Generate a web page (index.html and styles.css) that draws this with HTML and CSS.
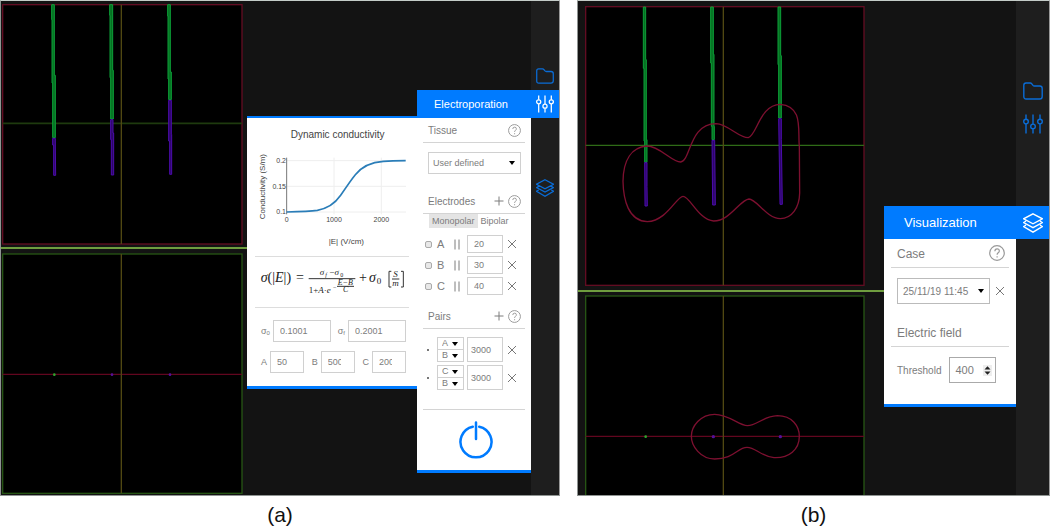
FILE: index.html
```html
<!DOCTYPE html>
<html lang="en">
<head>
<meta charset="utf-8">
<title>Electroporation planning</title>
<link rel="stylesheet" href="styles.css">
</head>
<body>
<svg class="sprite" aria-hidden="true">
  <symbol id="folder" viewBox="0 0 20 20"><path d="M.8 4.2q0-2.2 2.2-2.2h4.2q1 0 1.6.8l1.2 1.6q.5.6 1.4.6h5.400q2.400 0 2.400 2.400v8q0 2.600-2.600 2.600H3.200Q.8 18 .8 15.500z"/></symbol>
  <symbol id="sliders" viewBox="0 0 20 20"><path d="M3 .5v4.700M3 10v9.500M10 .5v9.500M10 14.800v4.700M17 .5v4.700M17 10v9.500"/><circle cx="3" cy="7.600" r="2.300"/><circle cx="10" cy="12.400" r="2.300"/><circle cx="17" cy="7.600" r="2.300"/></symbol>
  <symbol id="layers" viewBox="0 0 20 20"><path d="M10 .8l9.400 5-9.400 5-9.400-5zM3 8.200l-2.400 1.400 9.400 5 9.400-5L17 8.200M3 12.200l-2.400 1.400 9.400 5.600 9.400-5.600-2.400-1.400"/></symbol>
  <symbol id="help" viewBox="0 0 16 16"><circle cx="8" cy="8" r="7.300"/><path d="M5.900 6.200q0-2.300 2.200-2.300t2.200 2q0 1.100-1.100 1.900T8.100 9.800M8.100 11.300v1.300"/></symbol>
  <symbol id="plus" viewBox="0 0 10 10"><path d="M5 .5v9M.5 5h9"/></symbol>
  <symbol id="cross" viewBox="0 0 10 10"><path d="M1 1l8 8M9 1l-8 8"/></symbol>
  <symbol id="needle" viewBox="0 0 6 10"><path d="M1 0v10M5 0v10"/></symbol>
</svg>
<main class="figures">
  <figure class="figure">
    <div class="app app-a">
      <div class="views">
        <svg class="view" viewBox="6 11 723 723" role="img" aria-label="Coronal view">
          <rect class="slice red" x="8" y="13" width="718" height="718"/>
          <path class="axis-green" d="M8 369H726"/><path class="axis-yellow" d="M364 13V731"/>
          <path class="shaft" d="M155 13H163V225H166V412H158V248H156V58H155Z"/>
          <path class="tip" d="M158 414H166V440L167 525H161V434H158Z"/>
          <path class="shaft" d="M329 13H338V210H340V356H332V232H330V45H329Z"/>
          <path class="tip" d="M332 358H339V398H341V524H334V418H332Z"/>
          <path class="shaft" d="M503 13H511V215H514V298H506V236H504V47H503Z"/>
          <path class="tip" d="M506 300H514V402H515V522H509V422H506Z"/>
        </svg>
        <hr class="split">
        <svg class="view" viewBox="6 38 723 723" role="img" aria-label="Axial view">
          <rect class="slice green" x="8" y="41" width="718" height="718"/>
          <path class="axis-red" d="M8 402H726"/><path class="axis-yellow" d="M364 41V759"/>
          <circle class="dot-green" cx="163" cy="403" r="4"/><circle class="dot-purple" cx="336" cy="403" r="4"/><circle class="dot-purple" cx="510" cy="403" r="4"/>
        </svg>
      </div>
      <nav class="rail">
        <button aria-label="Files"><svg><use href="#folder"/></svg></button>
        <button class="active" aria-label="Electroporation"><svg><use href="#sliders"/></svg></button>
        <button class="last" aria-label="Visualization"><svg><use href="#layers"/></svg></button>
      </nav>
      <div class="drawer">
        <section class="curve-panel">
          <svg class="chart" viewBox="21 39 510 414" role="img" aria-label="Dynamic conductivity">
            <path class="grid" d="M140 167H498M140 244H498M140 321H498M282 158V328M424 158V328"/>
            <path class="zero" d="M140 158V328"/>
            <path class="curve" d="M140 321C180 320 210 319 232 316C262 311 284 297 302 271C320 244 332 226 346 209C370 179 400 171 430 169C455 167 475 167 497 167"/>
            <text class="title" x="293" y="99">Dynamic conductivity</text>
            <text class="label" transform="translate(75 245) rotate(-90)">Conductivity (S/m)</text>
            <text class="label" x="319" y="418">|E| (V/cm)</text>
            <g class="tick end"><text x="138" y="174">0.2</text><text x="138" y="251">0.15</text><text x="138" y="328">0.1</text></g>
            <g class="tick"><text x="140" y="352">0</text><text x="282" y="352">1000</text><text x="424" y="352">2000</text></g>
          </svg>
          <svg class="formula" viewBox="45 21 462 150" role="img" aria-label="Conductivity formula">
            <text class="f-main" x="62" y="97"><tspan class="it">σ</tspan>(|<tspan class="it">E</tspan>|)</text>
            <text class="f-main" x="168" y="97">=</text>
            <text class="f-mid it" x="239" y="76">σ</text><text class="f-small it" x="256" y="81">f</text>
            <text class="f-mid" x="268" y="76">−<tspan class="it">σ</tspan></text><text class="f-small" x="301" y="80">0</text>
            <path d="M206 86H346" />
            <text class="f-mid" x="206" y="129">1+<tspan class="it">A</tspan>·<tspan class="it">e</tspan></text>
            <text class="f-small" x="279" y="116">−</text>
            <text class="f-exp it" x="293" y="106">E−B</text>
            <path d="M291 109H342"/>
            <text class="f-exp it" x="309" y="127">C</text>
            <text class="f-main" x="357" y="97">+</text>
            <text class="f-main it" x="387" y="97">σ</text><text class="f-mid" x="410" y="103">0</text>
            <path d="M454 64H447V111H454M483 64H490V111H483M456 87H478"/>
            <text class="f-mid it" x="460" y="81">S</text><text class="f-mid it" x="457" y="108">m</text>
          </svg>
          <div class="params">
            <label>σ<sub>0</sub><input class="wide" value="0.1001"></label>
            <label>σ<sub>f</sub><input class="wide" value="0.2001"></label>
          </div>
          <div class="params">
            <label>A<input value="50"></label>
            <label>B<input value="500"></label>
            <label>C<input value="200"></label>
          </div>
        </section>
        <section class="panel">
          <h1>Electroporation</h1>
          <header class="head"><h2>Tissue</h2><button aria-label="Help"><svg class="help"><use href="#help"/></svg></button></header>
          <div class="select tissue"><select aria-label="Tissue"><option>User defined</option></select></div>
          <header class="head"><h2>Electrodes</h2><button aria-label="Add electrode"><svg class="plus"><use href="#plus"/></svg></button><button aria-label="Help"><svg class="help"><use href="#help"/></svg></button></header>
          <div class="tabs"><button class="on">Monopolar</button><button>Bipolar</button></div>
          <ul class="electrodes">
            <li><input type="checkbox" id="ea"><label for="ea">A</label><svg class="needle"><use href="#needle"/></svg><input class="num" aria-label="Length A" value="20"><button aria-label="Remove A"><svg class="cross"><use href="#cross"/></svg></button></li>
            <li><input type="checkbox" id="eb"><label for="eb">B</label><svg class="needle"><use href="#needle"/></svg><input class="num" aria-label="Length B" value="30"><button aria-label="Remove B"><svg class="cross"><use href="#cross"/></svg></button></li>
            <li><input type="checkbox" id="ec"><label for="ec">C</label><svg class="needle"><use href="#needle"/></svg><input class="num" aria-label="Length C" value="40"><button aria-label="Remove C"><svg class="cross"><use href="#cross"/></svg></button></li>
          </ul>
          <header class="head"><h2>Pairs</h2><button aria-label="Add pair"><svg class="plus"><use href="#plus"/></svg></button><button aria-label="Help"><svg class="help"><use href="#help"/></svg></button></header>
          <ul class="pairs">
            <li><i class="bullet"></i><div class="duo"><div class="select"><select aria-label="First electrode"><option>A</option></select></div><div class="select"><select aria-label="Second electrode"><option>B</option></select></div></div><input class="volt" aria-label="Voltage" value="3000"><button aria-label="Remove pair"><svg class="cross"><use href="#cross"/></svg></button></li>
            <li><i class="bullet"></i><div class="duo"><div class="select"><select aria-label="First electrode"><option>C</option></select></div><div class="select"><select aria-label="Second electrode"><option>B</option></select></div></div><input class="volt" aria-label="Voltage" value="3000"><button aria-label="Remove pair"><svg class="cross"><use href="#cross"/></svg></button></li>
          </ul>
          <div class="run"><button aria-label="Run"><svg class="power" viewBox="0 0 36 38"><path d="M14.800 5.700A15.500 15.500 0 1 0 21.200 5.700M18 1.500V18"/></svg></button></div>
        </section>
      </div>
    </div>
    <figcaption>(a)</figcaption>
  </figure>
  <figure class="figure">
    <div class="app app-b">
      <div class="views">
        <svg class="view" viewBox="45 19 840 840" role="img" aria-label="Coronal view">
          <rect class="slice red" x="47" y="21" width="835" height="836"/>
          <path class="axis-green bright" d="M47 437H882"/>
          <path class="shaft" d="M220 22H227V180H229V420H231V488H224V424H222V206H220Z"/>
          <path class="tip" d="M224 489H231V560L232 619H225Z"/>
          <path class="shaft" d="M422 22H430V164H432V380H433V420H426V380H424V190H422Z"/>
          <path class="tip" d="M426 422H434L436 616H428Z"/>
          <path class="shaft" d="M624 22H632V168H634V355H626V195H624Z"/>
          <path class="tip" d="M626 357H634V420L637 614H630Z"/>
          <path class="axis-yellow" d="M460 21V857"/>
          <path class="contour" d="M230 439C270 439 305 487 332 487C362 485 357 372 438 372C475 374 505 414 535 414C560 408 570 314 631 314C700 320 683 390 688 440L689 580C688 625 665 657 631 657C590 657 560 598 537 598C510 600 480 664 431 664C385 660 360 590 339 590C320 590 290 664 232 666C175 664 160 600 159 545C160 480 185 443 230 439Z"/>
        </svg>
        <hr class="split">
        <svg class="view" viewBox="43 76 840 600" role="img" aria-label="Axial view">
          <rect class="slice green" x="45" y="79" width="835" height="835"/>
          <path class="axis-red" d="M45 500H880"/><path class="axis-yellow" d="M458 79V680"/>
          <path class="contour" d="M432 434C475 434 505 468 530 468C560 468 575 440 620 438C665 438 686 470 686 500C686 540 655 566 610 564C570 560 555 533 529 533C500 533 490 568 432 568C390 568 362 530 362 500C362 470 390 434 432 434Z"/>
          <circle class="dot-green" cx="225" cy="501" r="4"/><circle class="dot-purple" cx="428" cy="501" r="5"/><circle class="dot-purple" cx="629" cy="501" r="5"/>
        </svg>
      </div>
      <nav class="rail">
        <button aria-label="Files"><svg><use href="#folder"/></svg></button>
        <button aria-label="Electroporation"><svg><use href="#sliders"/></svg></button>
        <button class="last active" aria-label="Visualization"><svg><use href="#layers"/></svg></button>
      </nav>
      <div class="drawer">
        <section class="panel">
          <h1>Visualization</h1>
          <header class="head"><h2>Case</h2><button aria-label="Help"><svg class="help"><use href="#help"/></svg></button></header>
          <div class="case"><div class="select"><select aria-label="Case"><option>25/11/19 11:45</option></select></div><button aria-label="Remove case"><svg class="cross"><use href="#cross"/></svg></button></div>
          <header class="head"><h2>Electric field</h2></header>
          <div class="threshold"><label for="threshold">Threshold</label><span class="spin"><input id="threshold" type="number" value="400"><svg viewBox="0 0 9 11"><path d="M1.500 4.500L4.500 1.200 7.500 4.500zM1.500 6.500L4.500 9.800 7.500 6.500z"/></svg></span></div>
        </section>
      </div>
    </div>
    <figcaption>(b)</figcaption>
  </figure>
</main>
</body>
</html>
```

FILE: styles.css
```css
* { box-sizing: border-box; }
body { margin: 0; background: #fff; color: #7c7c7c; font-family: "Liberation Sans", Arial, sans-serif; font-size: 9px; }
h1, h2, ul, figure { margin: 0; padding: 0; font-weight: 400; }
ul { list-style: none; }
button { display: flex; align-items: center; justify-content: center; margin: 0; padding: 0; border: 0; background: none; color: inherit; font: inherit; }
input, select { margin: 0; border: 1px solid #d0d0d0; border-radius: 0; background: #fff; color: #7c7c7c; font: inherit; appearance: none; }
svg { display: block; fill: none; stroke: currentColor; }
.sprite { position: absolute; width: 0; height: 0; }

.figures { display: grid; grid-template-columns: 560fr 473fr; column-gap: 17px; }
figcaption { padding-top: 7px; color: #111; font-size: 21px; line-height: 24px; text-align: center; }

.app { position: relative; display: flex; background: #131313; border: 1px solid #8f9492; border-top-color: #c4ccc8; border-right-color: #999; }
.views { flex: 1; min-width: 0; }
.rail { background: #1e1e1e; color: #0a6cd6; }
.rail .active { background: #007bff; color: #fff; }
.rail svg { stroke-width: 1.4; }

/* image slices */
.slice { fill: #000; stroke-width: 4; }
.slice.red { stroke: #620c22; }
.slice.green { stroke: #265414; }
.axis-green { stroke: #1e3a0e; stroke-width: 5; }
.axis-green.bright { stroke: #2f6b17; stroke-width: 4; }
.axis-yellow { stroke: #504812; stroke-width: 4; }
.axis-red { stroke: #62061f; stroke-width: 4; }
.shaft { fill: #067022; stroke: #0ca038; stroke-width: 3; }
.tip { fill: #2c0668; stroke: #4c0cac; stroke-width: 3; }
.contour { stroke: #7d1030; stroke-width: 4; }
.dot-green { fill: #2fa52f; stroke: none; }
.dot-purple { fill: #55109a; stroke: none; }
.split { height: 2px; margin: 0; border: 0; background: #6f9d3f; }

/* drawers open beside the rail */
.drawer { position: absolute; display: flex; align-items: flex-start; }
.panel { background: #fff; border-bottom: 3px solid #007bff; }
.panel h1 { background: #007bff; color: #fff; }
.head { display: flex; align-items: center; border-bottom: 1px solid #d4d4d4; }
.head h2 { flex: 1; }
.help { stroke: #999; stroke-width: 1.2; }
.plus { width: 10px; height: 10px; margin-right: 4px; }
.cross { width: 10px; height: 10px; stroke: #777; }
.select { position: relative; }
.select select { display: block; width: 100%; }
.select::after { content: ""; position: absolute; top: calc(50% - 2px); right: 6px; border: 3px solid transparent; border-top: 4px solid #000; border-bottom: 0; pointer-events: none; }

.app-a .views { padding: 3px 0 1px 1px; }
.app-a .view { width: 241px; height: 241px; }
.app-a .split { margin: 2px 0 4px -1px; }
.app-a .rail { width: 28px; padding-top: 61px; }
.app-a .rail button { width: 28px; height: 28px; }
.app-a .rail svg { width: 18px; height: 18px; }
.app-a .last { margin-top: 56px; }
.app-a .drawer { top: 89px; right: 28px; }
.app-a .panel { width: 114px; }
.app-a h1 { padding-left: 17px; font-size: 11px; line-height: 28px; }
.app-a .head { height: 25px; margin: 0 6px; padding: 0 4px 0 5px; font-size: 10px; }
.app-a h2 { font-size: 10px; }
.app-a .help { width: 13px; height: 13px; }

.curve-panel { width: 170px; margin-top: 26px; padding-bottom: 13px; background: #fff; border: solid #007bff; border-width: 2px 0 3px; }
.chart { width: 170px; height: 138px; }
.chart text { fill: #444; stroke: none; text-anchor: middle; }
.chart .title { font-size: 30px; }
.chart .label { font-size: 24px; }
.chart .tick { font-size: 21px; }
.chart .end text { text-anchor: end; }
.grid { stroke: #eee; stroke-width: 3; }
.zero { stroke: #777; stroke-width: 3; }
.curve { stroke: #2a7db8; stroke-width: 5; }
.formula { width: 154px; height: 52px; margin: 0 8px 12px; border: solid #ddd; border-width: 1px 0; }
.formula text { fill: #222; stroke: none; font-family: "Liberation Serif", serif; }
.formula path { stroke: #333; stroke-width: 3; }
.formula .it { font-style: italic; }
.f-main { font-size: 42px; }
.f-mid { font-size: 27px; }
.f-exp { font-size: 24px; }
.f-small { font-size: 18px; }
.params { display: flex; justify-content: space-between; padding: 0 11px 0 14px; }
.params + .params { margin-top: 9px; }
.params label { display: flex; align-items: center; }
.params sub { font-size: 6px; vertical-align: baseline; padding-top: 4px; }
.params input { width: 34px; height: 22px; margin-left: 3px; padding: 0 13px 0 6px; }
.params .wide { width: 58px; padding-right: 6px; }

.tissue { margin: 9px 10px 15px 11px; }
.tissue select { height: 22px; padding: 0 4px; }
.tabs { display: flex; margin-left: 12px; }
.tabs button { height: 14px; padding: 0 3px; }
.tabs .on { background: #e4e4e4; }
.electrodes { display: grid; gap: 3px; margin: 7px 0 9px; }
.electrodes li { display: flex; align-items: center; height: 18px; padding-left: 8px; }
.electrodes [type="checkbox"] { width: 7px; height: 7px; border-color: #aaa; border-radius: 2px; background: #e8e8e8; }
.electrodes label { width: 22px; padding-left: 5px; font-size: 11px; }
.needle { width: 6px; height: 11px; }
.num { width: 36px; height: 18px; margin: 0 4px 0 7px; padding: 0 6px; }
.pairs { display: grid; gap: 3px; margin: 8px 0 19px; }
.pairs li { display: flex; align-items: center; height: 25px; padding-left: 10px; }
.bullet { width: 2px; height: 2px; margin-right: 8px; background: #777; }
.duo { width: 27px; }
.duo select { height: 13px; padding: 0 4px; line-height: 11px; }
.duo .select + .select { margin-top: -1px; }
.volt { width: 36px; height: 25px; margin: 0 4px 0 3px; padding: 0 3px; }
.run { display: flex; justify-content: center; margin: 0 6px; padding: 11px 0 11px 3px; border-top: 1px solid #d4d4d4; }
.power { width: 36px; height: 38px; stroke: #007bff; stroke-width: 2.5; stroke-linecap: round; }

.app-b .views { padding: 5px 0 0 7px; }
.app-b .view { width: 280px; height: 280px; }
.app-b .split + .view { height: 200px; }
.app-b .split { margin: 4px 0 3px -7px; }
.app-b .rail { width: 33px; padding-top: 73px; }
.app-b .rail button { width: 33px; height: 33px; }
.app-b .rail svg { width: 20px; height: 20px; }
.app-b .last { margin-top: 66px; }
.app-b .drawer { top: 205px; right: 33px; }
.app-b .panel { width: 132px; padding-bottom: 21px; }
.app-b h1 { padding-left: 20px; font-size: 13px; line-height: 33px; }
.app-b .head { height: 29px; margin: 0 7px; padding: 0 4px 0 6px; }
.app-b h2 { padding-top: 2px; font-size: 12px; }
.app-b .help { width: 16px; height: 16px; }
.case { display: flex; align-items: center; gap: 5px; margin: 10px 0 14px 13px; font-size: 10px; }
.case .select { width: 93px; }
.case select { height: 26px; padding: 0 5px; border-color: #bbb; }
.threshold { display: flex; align-items: center; gap: 8px; margin: 10px 0 0 13px; font-size: 10px; }
.spin { position: relative; }
.spin input { display: block; width: 47px; height: 26px; padding: 0 5px; border-color: #aaa; font-size: 11px; appearance: textfield; }
.spin input::-webkit-inner-spin-button { appearance: none; }
.spin svg { position: absolute; top: 8px; right: 4px; width: 9px; height: 11px; background: #eee; fill: #222; stroke: none; }
```
